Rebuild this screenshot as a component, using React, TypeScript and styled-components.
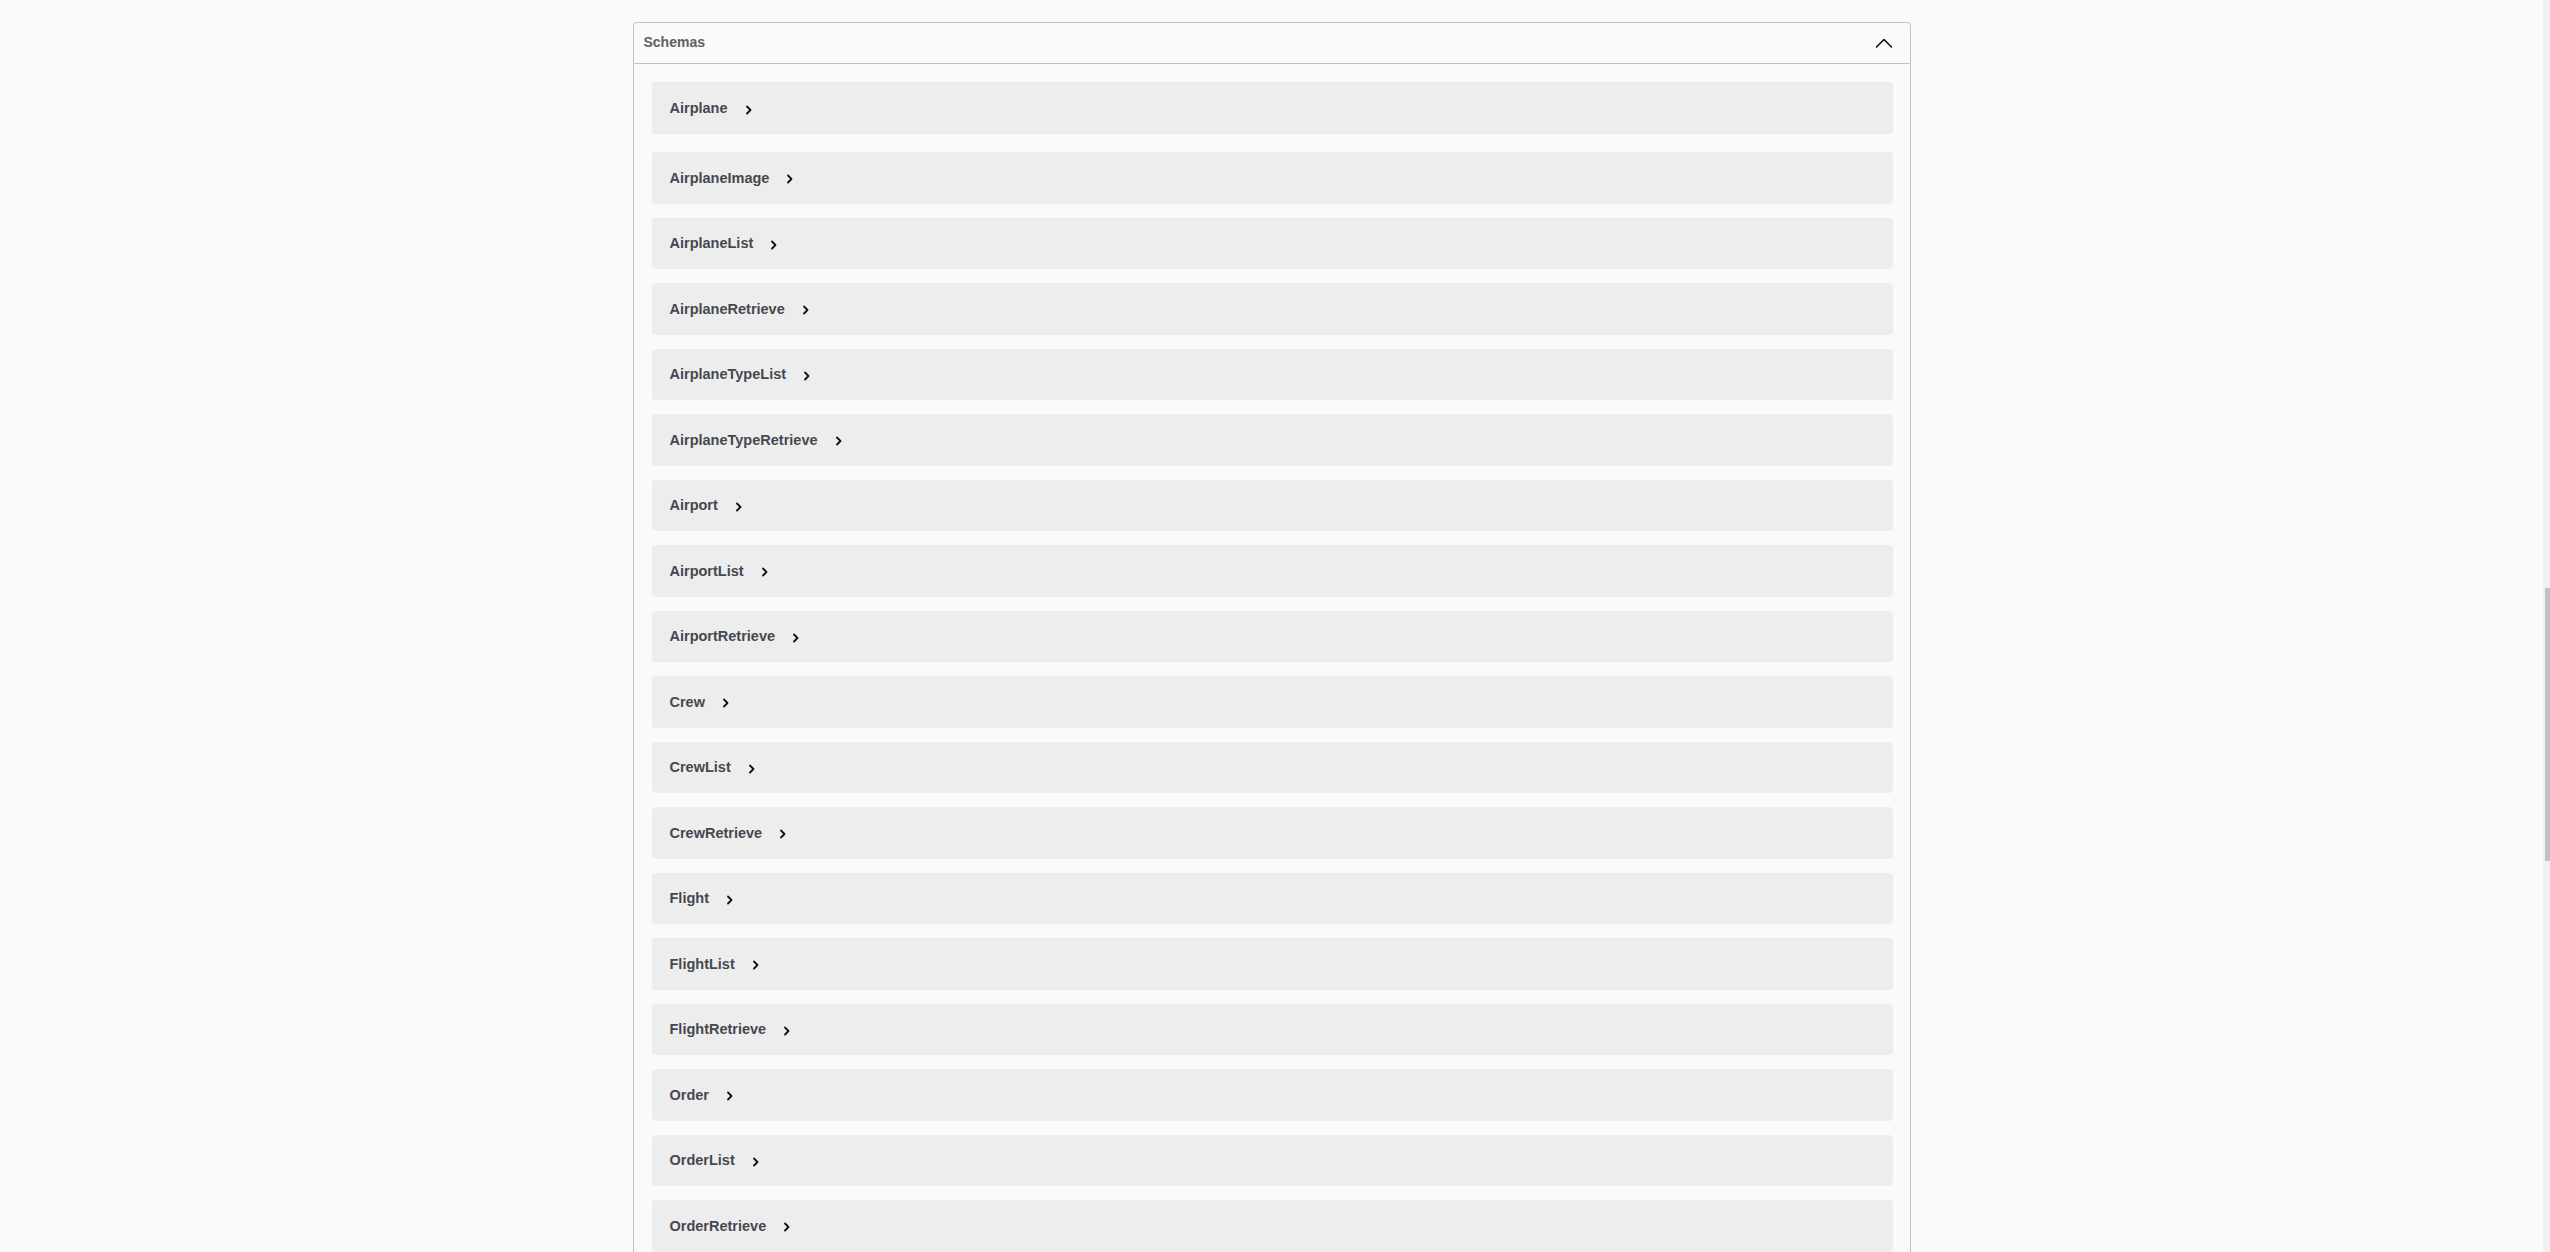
import React from "react";
import styled, { createGlobalStyle } from "styled-components";

const schemas = [
  "Airplane",
  "AirplaneImage",
  "AirplaneList",
  "AirplaneRetrieve",
  "AirplaneTypeList",
  "AirplaneTypeRetrieve",
  "Airport",
  "AirportList",
  "AirportRetrieve",
  "Crew",
  "CrewList",
  "CrewRetrieve",
  "Flight",
  "FlightList",
  "FlightRetrieve",
  "Order",
  "OrderList",
  "OrderRetrieve",
];

const GlobalStyle = createGlobalStyle`
  html, body {
    margin: 0;
    padding: 0;
    height: 100%;
    overflow: hidden;
    background: #fafafa;
  }
  #root {
    height: 100%;
  }
`;

const ArrowRight = () => (
  <svg width="8" height="10" viewBox="0 0 8 10">
    <polyline
      points="2,1.5 5.5,5 2,8.5"
      fill="none"
      stroke="#111"
      strokeWidth="1.8"
      strokeLinecap="round"
      strokeLinejoin="round"
    />
  </svg>
);

const ArrowUp = () => (
  <svg width="20" height="12" viewBox="0 0 20 12">
    <polyline
      points="2.5,10 10,2.5 17.5,10"
      fill="none"
      stroke="#111"
      strokeWidth="1.6"
      strokeLinecap="round"
      strokeLinejoin="round"
    />
  </svg>
);

export default function App() {
  return (
    <>
      <GlobalStyle />
      <Page>
        <Main>
          <Models>
            <ModelsHeader>
              <span>Schemas</span>
              <ArrowUp />
            </ModelsHeader>
            <ModelList>
              {schemas.map((name) => (
                <ModelRow key={name}>
                  <ModelTitle>{name}</ModelTitle>
                  <ArrowRight />
                </ModelRow>
              ))}
            </ModelList>
          </Models>
        </Main>
        <ScrollTrack>
          <ScrollThumb />
        </ScrollTrack>
      </Page>
    </>
  );
}

const Page = styled.div`
  display: flex;
  height: 100%;
  overflow: hidden;
  font-family: "Liberation Sans", Arial, sans-serif;
`;

const Main = styled.div`
  flex: 1;
  display: flex;
  justify-content: center;
  padding-top: 22px;
  overflow: hidden;
`;

const Models = styled.section`
  width: 1278px;
  box-sizing: border-box;
  border: 1px solid rgba(59, 65, 81, 0.3);
  border-radius: 4px;
  align-self: flex-start;
`;

const ModelsHeader = styled.div`
  display: flex;
  align-items: center;
  justify-content: space-between;
  height: 41px;
  box-sizing: border-box;
  padding: 0 16px 2px 10px;
  border-bottom: 1px solid rgba(59, 65, 81, 0.3);
  font-size: 14px;
  font-weight: 700;
  color: #606060;

  svg {
    margin-top: 2px;
  }
`;

const ModelList = styled.div`
  display: flex;
  flex-direction: column;
  padding: 18px 17px 24px 18px;
  gap: 14px;

  & > :first-child {
    height: 52px;
    margin-bottom: 4px;
  }
`;

const ModelRow = styled.div`
  display: flex;
  align-items: center;
  gap: 17px;
  height: 51.5px;
  padding: 0 18px;
  border-radius: 4px;
  background: rgba(0, 0, 0, 0.05);
  flex-shrink: 0;

  svg {
    margin-top: 3px;
  }
`;

const ModelTitle = styled.span`
  font-size: 14.5px;
  font-weight: 700;
  color: #45484f;
`;

const ScrollTrack = styled.div`
  width: 7px;
  flex-shrink: 0;
  background: #f1f1f1;
  padding-top: 588px;
  box-sizing: border-box;
`;

const ScrollThumb = styled.div`
  width: 5px;
  margin-left: 2px;
  height: 273px;
  background: #c1c1c1;
`;
